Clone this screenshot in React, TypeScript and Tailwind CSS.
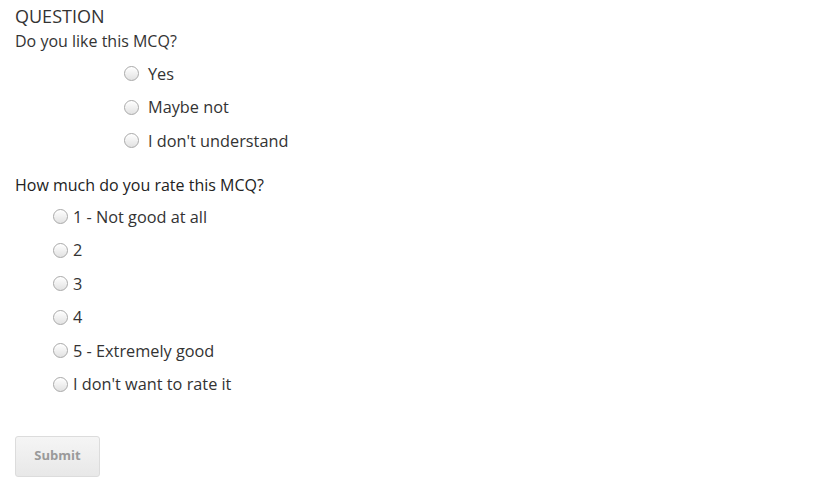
const likeOptions = ["Yes", "Maybe not", "I don't understand"];

const rateOptions = ["1 - Not good at all", "2", "3", "4", "5 - Extremely good", "I don't want to rate it"];

function Radio() {
  return (
    <span className="inline-block w-[15px] h-[15px] shrink-0 rounded-full border border-[#a9a9a9] bg-gradient-to-b from-[#ffffff] to-[#e2e2e2] shadow-[inset_0_1px_1px_rgba(255,255,255,0.9)]" />
  );
}

export default function App() {
  return (
    <main
      className="min-h-[497px] w-[836px] bg-white pl-[15px] text-[#333333]"
      style={{ fontFamily: "'Open Sans', 'Liberation Sans', sans-serif" }}
    >
      {/* Question header */}
      <div className="pt-[5px] text-[18px] leading-[22px]">QUESTION</div>
      <div className="mt-[3px] text-[16px] leading-[22px]">Do you like this MCQ?</div>

      <div className="mt-[5px] ml-[109px]">
        {likeOptions.map((opt) => (
          <label key={opt} className="flex h-[33.5px] items-center gap-[9px] text-[16.3px]">
            <Radio />
            <span>{opt}</span>
          </label>
        ))}
      </div>

      {/* Rating */}
      <div className="mt-[16.5px] text-[16px] leading-[22px] text-[#222222]">How much do you rate this MCQ?</div>

      <div className="mt-[4px] ml-[38px]">
        {rateOptions.map((opt) => (
          <label key={opt} className="flex h-[33.5px] items-center gap-[5px] text-[16.3px]">
            <Radio />
            <span>{opt}</span>
          </label>
        ))}
      </div>

      <button
        disabled
        className="mt-[34.5px] h-[41px] w-[85px] rounded-[3px] border border-[#dcdcdc] bg-gradient-to-b from-[#f5f5f5] to-[#e8e8e8] text-[13px] font-bold text-[#9a9a9a]"
      >
        Submit
      </button>
    </main>
  );
}
